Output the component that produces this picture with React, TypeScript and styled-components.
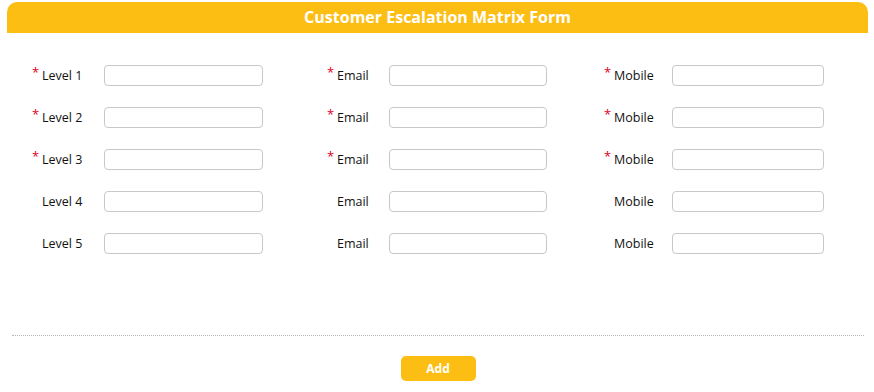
import {FC} from "react";
import styled, {createGlobalStyle} from "styled-components";

const GlobalStyle = createGlobalStyle`
  body {
    margin: 0;
    background: #fff;
    font-family: "Open Sans", "Liberation Sans", sans-serif;
  }
`

const YELLOW = '#fdbe14'

type FieldDef = { label: string, required: boolean }

const rows: FieldDef[][] = [1, 2, 3, 4, 5].map(n => [
    {label: `Level ${n}`, required: n <= 3},
    {label: 'Email', required: n <= 3},
    {label: 'Mobile', required: n <= 3},
])

// label width, input width for each column
const columns = [
    {labelWidth: 62, inputWidth: 159},
    {labelWidth: 52, inputWidth: 158},
    {labelWidth: 58, inputWidth: 152},
]

const Field: FC<FieldDef & { labelWidth: number, inputWidth: number }> = ({label, required, labelWidth, inputWidth}) => (
    <FieldWrap>
        <Label width={labelWidth}>
            {required && <Star>*</Star>}
            {label}
        </Label>
        <Input type="text" width={inputWidth}/>
    </FieldWrap>
)

export default function App() {
    return (
        <Page>
            <GlobalStyle/>
            <Header>Customer Escalation Matrix Form</Header>
            <FormGrid>
                {rows.map((row, i) => row.map((f, j) => (
                    <Field key={`${i}-${j}`} {...f} {...columns[j]}/>
                )))}
            </FormGrid>
            <Divider/>
            <Footer>
                <AddButton>Add</AddButton>
            </Footer>
        </Page>
    )
}

const Page = styled.div`
  margin: 2px 6px 0 7px;
`

const Header = styled.div`
  background: ${YELLOW};
  height: 31px;
  border-radius: 10px 10px 0 0;
  color: #fff;
  font-family: "Open Sans", sans-serif;
  font-weight: 700;
  font-size: 16px;
  line-height: 31px;
  text-align: center;
`

const FormGrid = styled.div`
  display: grid;
  grid-template-columns: 295px 277px auto;
  row-gap: 21px;
  padding: 32px 0 0 35px;
  height: 256px;
  box-sizing: border-box;
  align-content: start;
`

const FieldWrap = styled.div`
  display: flex;
  align-items: center;
`

const Label = styled.label<{ width: number }>`
  position: relative;
  width: ${({width}) => width}px;
  font-size: 12.5px;
  color: #111;
`

const Star = styled.span`
  position: absolute;
  left: -10px;
  top: -4px;
  color: #e0001b;
  font-size: 13px;
`

const Input = styled.input<{ width: number }>`
  box-sizing: border-box;
  width: ${({width}) => width}px;
  height: 21px;
  border: 1px solid #c8c8c8;
  border-radius: 4px;
  background: #fff;
  outline: none;
`

const Divider = styled.div`
  margin: 46px 4px 0 5px;
  border-top: 1px dotted #b5b5b5;
`

const Footer = styled.div`
  display: flex;
  justify-content: center;
  padding-top: 20px;
  padding-left: 1px;
`

const AddButton = styled.button`
  width: 75px;
  height: 25px;
  border: none;
  border-radius: 5px;
  background: ${YELLOW};
  color: #fff;
  font-family: "Open Sans", sans-serif;
  font-weight: 700;
  font-size: 12px;
  cursor: pointer;
`
